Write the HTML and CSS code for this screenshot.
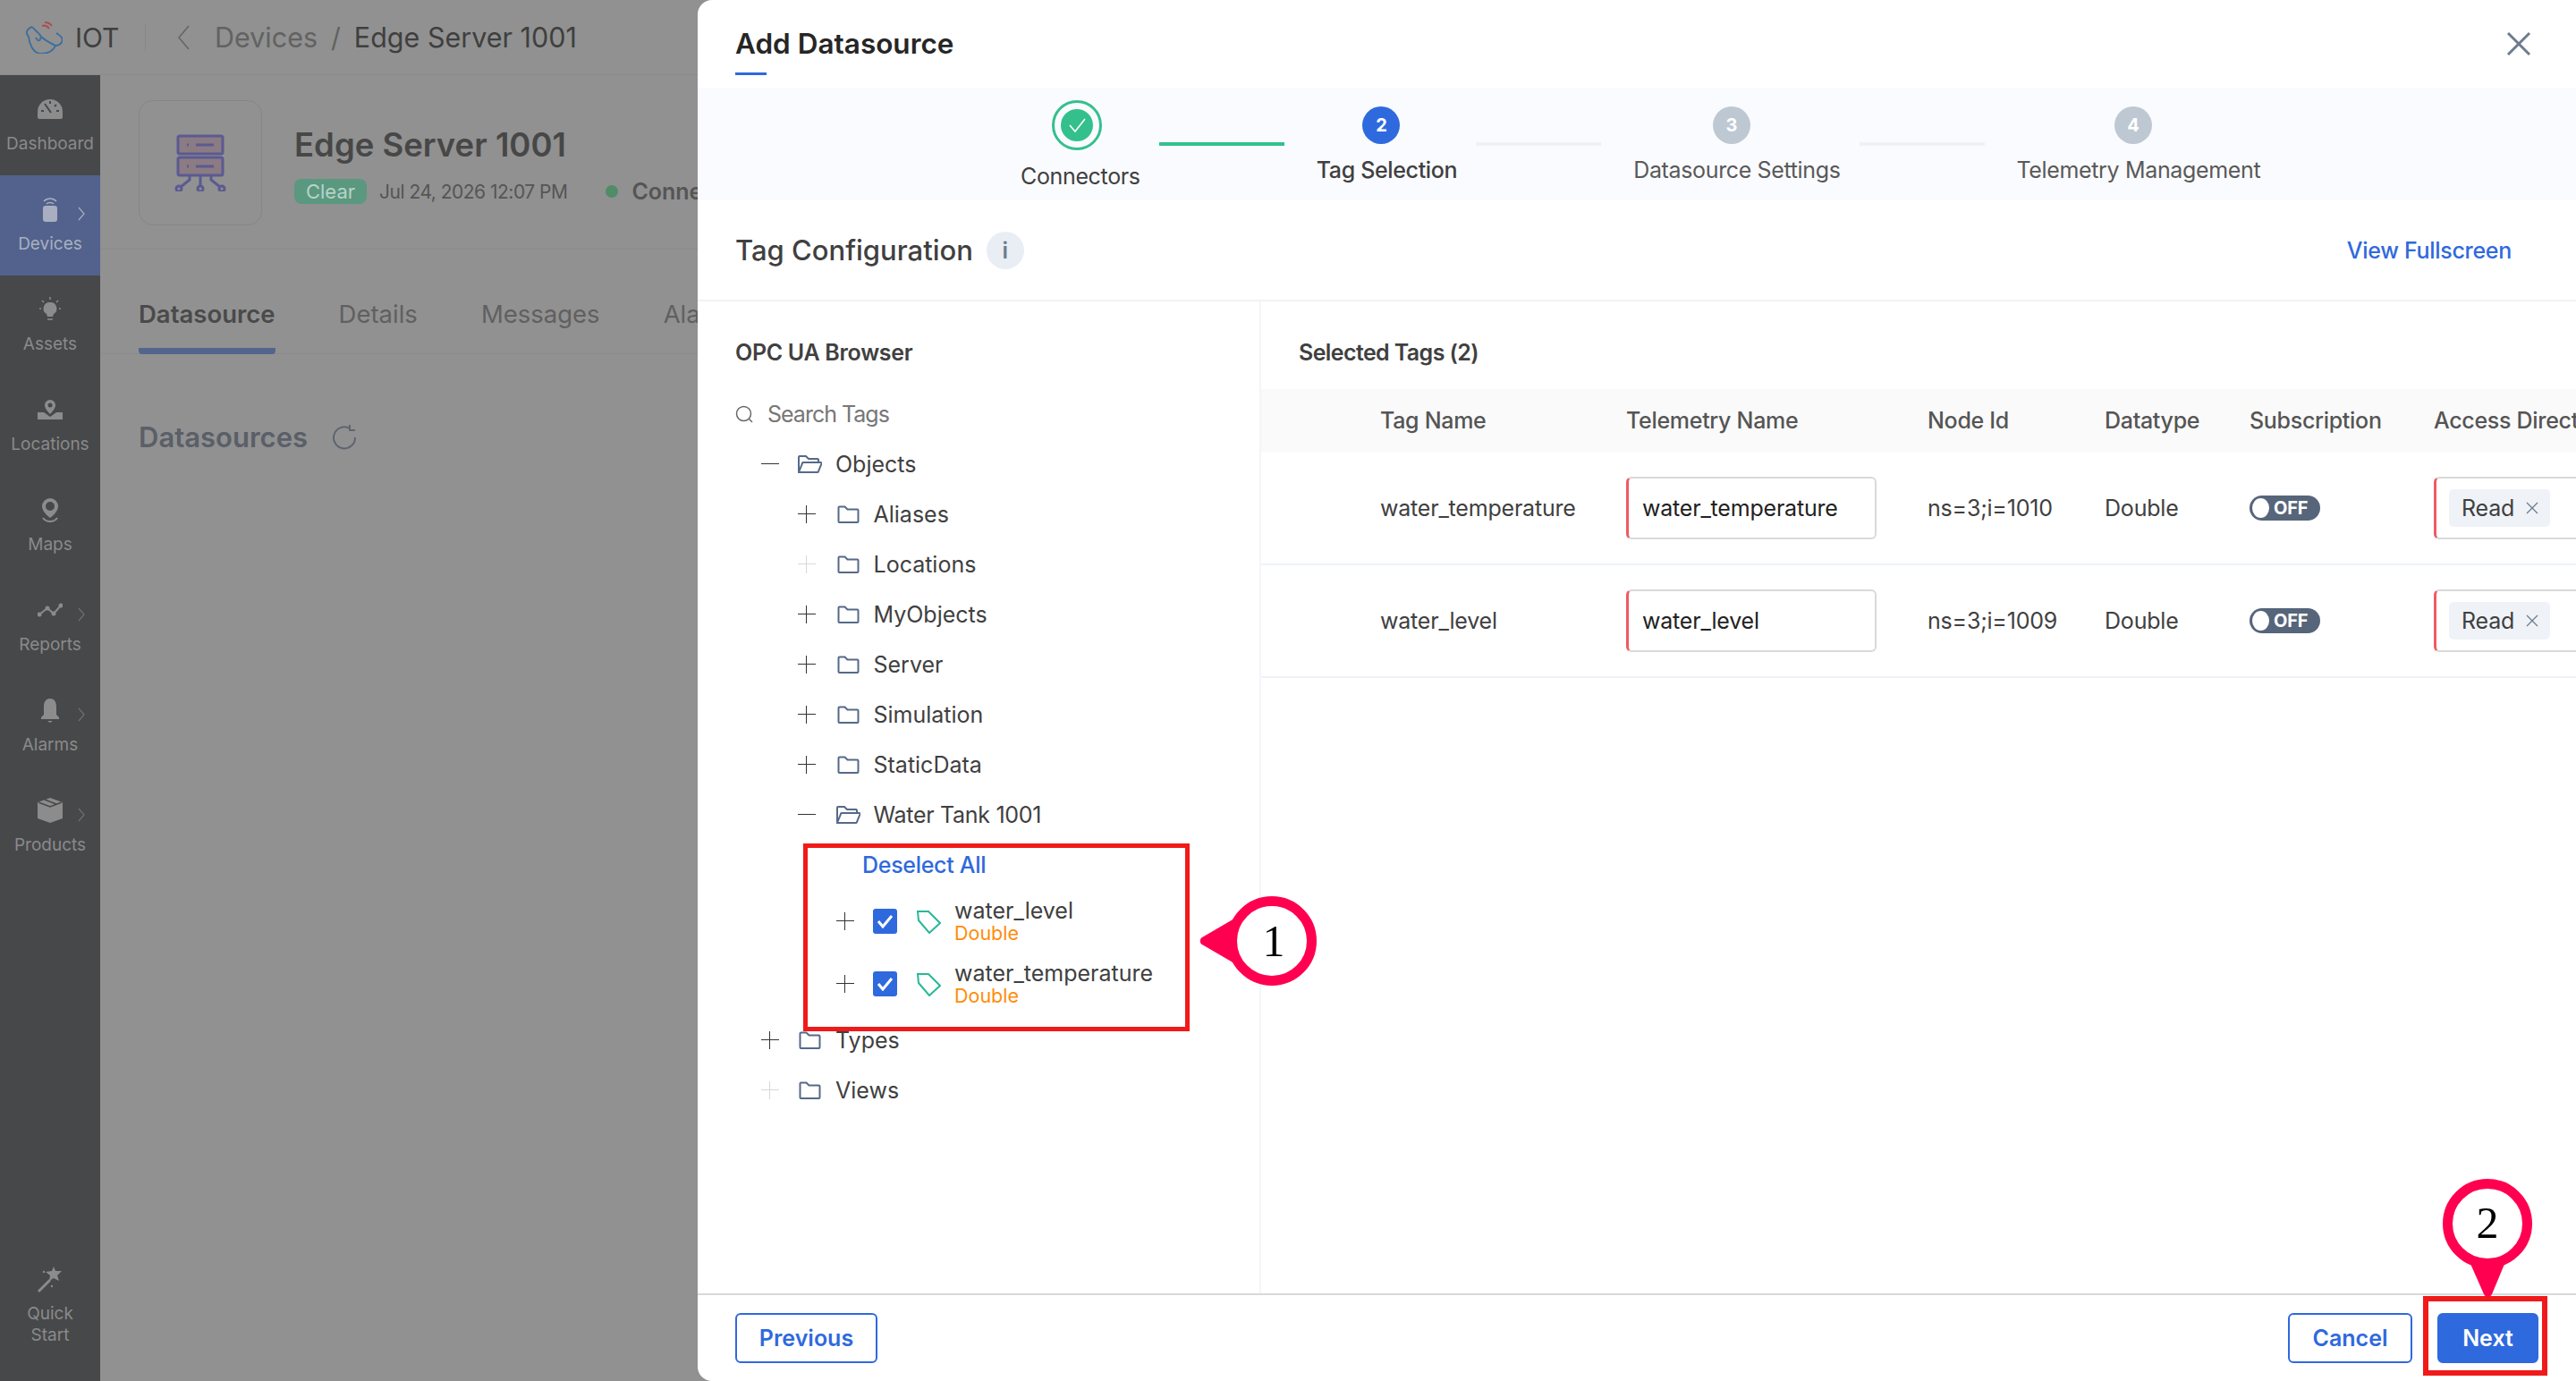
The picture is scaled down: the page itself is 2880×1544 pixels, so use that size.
FILE: index.html
```html
<!DOCTYPE html>
<html lang="en">
<head>
  <meta charset="UTF-8">
  <title>Add Datasource</title>
  <link rel="stylesheet" href="styles.css">
</head>
<body>

  <!-- Page behind the modal -->
  <div class="app">
    <header class="topbar">
      <svg class="logo" viewBox="0 0 42 36" fill="none" stroke="#3f6f9c" stroke-width="2">
        <path d="M8 6C2 8 0 13 4 17c1 9 5 18 13 19 10 0 15-4 17-9 6 0 9-5 7-9-2-3-5-4-6-5"/>
        <path d="M8 6c3 4 8 7 10 11 4 4 10 7 16 10"/>
        <path d="M12 18l3 4M18 17l-2 5"/>
        <path d="M19 5c3-1 6 0 8 3M22 1c3 0 6 1 8 4" stroke="#a8504f"/>
      </svg>
      <span class="app-name">IOT</span>
      <span class="top-sep"></span>
      <svg class="back" viewBox="0 0 14 28" fill="none" stroke="#666" stroke-width="1.6"><path d="M13 1L2 14l11 13"/></svg>
      <span class="crumb">Devices</span>
      <span class="crumb-slash">/</span>
      <span class="crumb-now">Edge Server 1001</span>
    </header>

    <div class="app-body">
      <nav class="sidebar">
        <a class="nav-item">
          <span class="nav-icon"><svg width="28" height="22" viewBox="0 0 28 22"><path fill="#8c8c8c" d="M14 0a14 14 0 0 1 14 14v6a2 2 0 0 1-2 2H2a2 2 0 0 1-2-2v-6A14 14 0 0 1 14 0z"/><path stroke="#47484a" stroke-width="2" d="M8 5l7 10M14 2v3M24 13h-3M4 13h3M21 6l-2 2"/></svg></span>
          <span class="nav-label">Dashboard</span>
        </a>
        <a class="nav-item active">
          <span class="nav-icon"><svg width="20" height="28" viewBox="0 0 20 28" fill="none"><path stroke="#a9afc0" stroke-width="1.5" d="M3 5c4-4 10-4 14 0M6 8c2-2 6-2 8 0"/><rect x="2" y="10" width="16" height="18" rx="3" fill="#a9afc0"/></svg></span>
          <svg class="nav-more" viewBox="0 0 8 16" fill="none" stroke="#a9afc0" stroke-width="1.2"><path d="M1 1l6 7-6 7"/></svg>
          <span class="nav-label">Devices</span>
        </a>
        <a class="nav-item">
          <span class="nav-icon"><svg width="24" height="28" viewBox="0 0 24 28" fill="none"><path fill="#8c8c8c" d="M12 6a7 7 0 0 1 4 13l-1 3H9l-1-3A7 7 0 0 1 12 6z"/><path stroke="#8c8c8c" stroke-width="1.5" d="M9 25h6M12 0v3M3 4l2 2M21 4l-2 2M0 13h2M22 13h2"/></svg></span>
          <span class="nav-label">Assets</span>
        </a>
        <a class="nav-item">
          <span class="nav-icon"><svg width="28" height="22" viewBox="0 0 28 22"><path fill="#8c8c8c" d="M14 0a6 6 0 0 1 6 6c0 3-3 7-6 10-3-3-6-7-6-10a6 6 0 0 1 6-6zM0 14h7l7 5 7-5h7v8H0z"/><circle cx="14" cy="6" r="2.5" fill="#47484a"/></svg></span>
          <span class="nav-label">Locations</span>
        </a>
        <a class="nav-item">
          <span class="nav-icon"><svg width="18" height="27" viewBox="0 0 18 27"><path fill="#8c8c8c" d="M9 0a9 9 0 0 1 9 9c0 5-5 10-9 13-4-3-9-8-9-13a9 9 0 0 1 9-9z"/><circle cx="9" cy="9" r="5" fill="#47484a"/><path stroke="#8c8c8c" stroke-width="2" fill="none" d="M1 22c2 3 5 4 8 4s6-1 8-4"/></svg></span>
          <span class="nav-label">Maps</span>
        </a>
        <a class="nav-item">
          <span class="nav-icon"><svg width="28" height="16" viewBox="0 0 28 16" fill="none" stroke="#8c8c8c" stroke-width="2"><path d="M2 13l9-7 7 6 8-9"/><circle cx="2" cy="13" r="1.5" fill="#8c8c8c"/><circle cx="11" cy="6" r="1.5" fill="#8c8c8c"/><circle cx="18" cy="12" r="1.5" fill="#8c8c8c"/><circle cx="26" cy="3" r="1.5" fill="#8c8c8c"/></svg></span>
          <svg class="nav-more" viewBox="0 0 8 16" fill="none" stroke="#6f6f6f" stroke-width="1.2"><path d="M1 1l6 7-6 7"/></svg>
          <span class="nav-label">Reports</span>
        </a>
        <a class="nav-item">
          <span class="nav-icon"><svg width="20" height="27" viewBox="0 0 20 27"><path fill="#8c8c8c" d="M10 0c5 0 7 4 7 9v9l3 3v2H0v-2l3-3V9c0-5 2-9 7-9zM7 25h6l-3 2z"/></svg></span>
          <svg class="nav-more" viewBox="0 0 8 16" fill="none" stroke="#6f6f6f" stroke-width="1.2"><path d="M1 1l6 7-6 7"/></svg>
          <span class="nav-label">Alarms</span>
        </a>
        <a class="nav-item">
          <span class="nav-icon"><svg width="28" height="28" viewBox="0 0 28 28"><path fill="#8c8c8c" d="M14 0l14 5v18l-14 5-14-5V5z"/><path fill="none" stroke="#47484a" stroke-width="1.5" d="M1 5l13 5 13-5M8 2l13 5"/></svg></span>
          <svg class="nav-more" viewBox="0 0 8 16" fill="none" stroke="#6f6f6f" stroke-width="1.2"><path d="M1 1l6 7-6 7"/></svg>
          <span class="nav-label">Products</span>
        </a>
        <a class="nav-item quick">
          <span class="nav-icon"><svg width="28" height="29" viewBox="0 0 28 29" fill="#8c8c8c"><path d="M18 0l2 5 7 0-5 5 2 6-6-3-5 3 1-6-5-4 7-1z"/><path d="M13 14l2 2L2 29l-2-2z"/><circle cx="7" cy="6" r="1.2"/><circle cx="16" cy="22" r="1.2"/></svg></span>
          <span class="nav-label">Quick<br>Start</span>
        </a>
      </nav>

      <main class="page">
        <section class="device-head">
          <div class="device-icon">
            <svg width="58" height="64" viewBox="0 0 58 64" fill="none" stroke="#5b5a92" stroke-width="3">
              <rect x="4" y="2" width="50" height="20" rx="2" fill="#8b7b83"/>
              <rect x="4" y="26" width="50" height="20" rx="2" fill="#8b7b83"/>
              <path d="M14 12h2M24 12h20M14 36h2M24 36h20M29 46v13M17 46v5l-10 8M41 46v5l10 8"/>
              <circle cx="5" cy="61" r="3"/><circle cx="29" cy="61" r="3"/><circle cx="53" cy="61" r="3"/>
            </svg>
          </div>
          <div class="device-info">
            <h1 class="device-title">Edge Server 1001</h1>
            <div class="device-meta">
              <span class="badge-clear">Clear</span>
              <span class="device-date">Jul 24, 2026 12:07 PM</span>
              <span class="dot"></span>
              <span class="device-state">Connected</span>
            </div>
          </div>
        </section>
        <div class="tabs">
          <span class="tab on">Datasource</span>
          <span class="tab">Details</span>
          <span class="tab">Messages</span>
          <span class="tab">Alarms</span>
        </div>
        <div class="ds-head">
          <h2>Datasources</h2>
          <svg width="28" height="28" viewBox="0 0 28 28" fill="none" stroke="#5e6570" stroke-width="2"><path d="M20 4a12 12 0 1 0 6 10M20 0v6h6"/></svg>
        </div>
      </main>
    </div>
  </div>

  <!-- Add Datasource modal -->
  <div class="modal">
    <div class="modal-head">
      <div class="modal-title">Add Datasource</div>
      <svg class="close" viewBox="0 0 28 28" fill="none" stroke="#6d7b8d" stroke-width="3"><path d="M2 2l24 24M26 2L2 26"/></svg>
    </div>

    <div class="stepper">
      <div class="step">
        <span class="step-done"><svg width="36" height="36" viewBox="0 0 36 36"><circle cx="18" cy="18" r="18" fill="#33c08d"/><path d="M10 18l6 7 11-14" fill="none" stroke="#fff" stroke-width="1.6"/></svg></span>
        <span class="step-label">Connectors</span>
      </div>
      <span class="step-line done"></span>
      <div class="step">
        <span class="step-num now">2</span>
        <span class="step-label now">Tag Selection</span>
      </div>
      <span class="step-line"></span>
      <div class="step">
        <span class="step-num">3</span>
        <span class="step-label later">Datasource Settings</span>
      </div>
      <span class="step-line"></span>
      <div class="step">
        <span class="step-num">4</span>
        <span class="step-label later">Telemetry Management</span>
      </div>
    </div>

    <div class="config-head">
      <span class="config-title">Tag Configuration</span>
      <span class="info">i</span>
      <a class="link fullscreen">View Fullscreen</a>
    </div>

    <div class="config-body">
      <aside class="browser">
        <div class="panel-title">OPC UA Browser</div>
        <div class="search">
          <svg width="20" height="20" viewBox="0 0 20 20" fill="none" stroke="#666" stroke-width="1.5"><circle cx="9.5" cy="9.5" r="8"/><path d="M15 15l4 4"/></svg>
          <span>Search Tags</span>
        </div>
        <div class="tree">
          <div class="row lvl1"><span class="exp minus"></span><svg class="fld"><use href="#folder-open"/></svg><span>Objects</span></div>
          <div class="row lvl2"><span class="exp plus"></span><svg class="fld"><use href="#folder"/></svg><span>Aliases</span></div>
          <div class="row lvl2"><span class="exp plus faint"></span><svg class="fld"><use href="#folder"/></svg><span>Locations</span></div>
          <div class="row lvl2"><span class="exp plus"></span><svg class="fld"><use href="#folder"/></svg><span>MyObjects</span></div>
          <div class="row lvl2"><span class="exp plus"></span><svg class="fld"><use href="#folder"/></svg><span>Server</span></div>
          <div class="row lvl2"><span class="exp plus"></span><svg class="fld"><use href="#folder"/></svg><span>Simulation</span></div>
          <div class="row lvl2"><span class="exp plus"></span><svg class="fld"><use href="#folder"/></svg><span>StaticData</span></div>
          <div class="row lvl2"><span class="exp minus"></span><svg class="fld"><use href="#folder-open"/></svg><span class="tank">Water Tank 1001</span></div>
          <div class="row deselect"><a class="link">Deselect All</a></div>
          <div class="tag-row">
            <span class="exp plus"></span>
            <span class="check"><svg width="19" height="16" viewBox="0 0 19 16" fill="none" stroke="#fff" stroke-width="3"><path d="M2 8l5 6L17 2"/></svg></span>
            <svg class="tag"><use href="#tag"/></svg>
            <div class="tag-text"><div>water_level</div><div class="tag-type">Double</div></div>
          </div>
          <div class="tag-row">
            <span class="exp plus"></span>
            <span class="check"><svg width="19" height="16" viewBox="0 0 19 16" fill="none" stroke="#fff" stroke-width="3"><path d="M2 8l5 6L17 2"/></svg></span>
            <svg class="tag"><use href="#tag"/></svg>
            <div class="tag-text"><div>water_temperature</div><div class="tag-type">Double</div></div>
          </div>
          <div class="row lvl1"><span class="exp plus"></span><svg class="fld"><use href="#folder"/></svg><span>Types</span></div>
          <div class="row lvl1"><span class="exp plus faint"></span><svg class="fld"><use href="#folder"/></svg><span>Views</span></div>
        </div>
      </aside>

      <section class="selected">
        <div class="panel-title">Selected Tags (2)</div>
        <table class="tags-table">
          <thead>
            <tr>
              <th class="c-blank"></th>
              <th class="c-tag">Tag Name</th>
              <th class="c-tele">Telemetry Name</th>
              <th class="c-node">Node Id</th>
              <th class="c-type">Datatype</th>
              <th class="c-sub">Subscription</th>
              <th class="c-acc">Access Direction</th>
            </tr>
          </thead>
          <tbody>
            <tr>
              <td></td>
              <td>water_temperature</td>
              <td><div class="field">water_temperature</div></td>
              <td>ns=3;i=1010</td>
              <td>Double</td>
              <td><span class="toggle"><i></i>OFF</span></td>
              <td><div class="field access"><span class="chip">Read<svg width="14" height="14" viewBox="0 0 14 14" stroke="#6d7b8d" stroke-width="1.3"><path d="M1 1l12 12M13 1L1 13"/></svg></span></div></td>
            </tr>
            <tr>
              <td></td>
              <td>water_level</td>
              <td><div class="field">water_level</div></td>
              <td>ns=3;i=1009</td>
              <td>Double</td>
              <td><span class="toggle"><i></i>OFF</span></td>
              <td><div class="field access"><span class="chip">Read<svg width="14" height="14" viewBox="0 0 14 14" stroke="#6d7b8d" stroke-width="1.3"><path d="M1 1l12 12M13 1L1 13"/></svg></span></div></td>
            </tr>
          </tbody>
        </table>
      </section>
    </div>

    <div class="modal-foot">
      <button class="btn">Previous</button>
      <span class="foot-gap"></span>
      <button class="btn">Cancel</button>
      <button class="btn primary">Next</button>
    </div>
  </div>

  <!-- Tutorial annotations over the screenshot -->
  <div class="mark mark-tree"></div>
  <div class="mark mark-next"></div>
  <svg class="callout callout-1" width="136" height="104" viewBox="0 0 136 104">
    <path d="M4 48l36-21v50L4 56c-3-2-3-6 0-8z" fill="#ff0050"/>
    <circle cx="82" cy="52" r="44.500" fill="#fff" stroke="#ff0050" stroke-width="11"/>
    <text x="84" y="69" text-anchor="middle" class="callout-num">1</text>
  </svg>
  <svg class="callout callout-2" width="104" height="136" viewBox="0 0 104 136">
    <path d="M30 90h44l-17 41c-2 4-7 4-9 0z" fill="#ff0050"/>
    <circle cx="52" cy="52" r="44.500" fill="#fff" stroke="#ff0050" stroke-width="11"/>
    <text x="52" y="68" text-anchor="middle" class="callout-num">2</text>
  </svg>

  <!-- Shared icons -->
  <svg class="defs">
    <symbol id="folder" viewBox="0 0 27 22"><path d="M2.500 19V3.500a1 1 0 0 1 1-1h6l3 3h11a1 1 0 0 1 1 1V19a1 1 0 0 1-1 1h-20a1 1 0 0 1-1-1z" fill="none" stroke="#56698a" stroke-width="2"/></symbol>
    <symbol id="folder-open" viewBox="0 0 27 22"><path d="M1 19V3a1 1 0 0 1 1-1h7l3 3h10a1 1 0 0 1 1 1v3M1 20l4-10a1 1 0 0 1 1-1h19.500a1 1 0 0 1 1 1.300L23 19a1 1 0 0 1-1 1H1z" fill="none" stroke="#56698a" stroke-width="2"/></symbol>
    <symbol id="tag" viewBox="0 0 27 27"><path d="M1 2h12l13 13-12 11L2 12z" fill="none" stroke="#27b898" stroke-width="2"/></symbol>
  </svg>

</body>
</html>
```

FILE: styles.css
```css
* {
  box-sizing: border-box;
}

body {
  margin: 0;
  height: 1544px;
  overflow: hidden;
  position: relative;
  font-family: Inter, "Noto Sans", sans-serif;
  font-size: 25px;
  color: #404040;
  background-color: #919191;
}

.defs {
  display: none;
}

/* Page behind the modal, already dimmed */
.app {
  height: 100%;
  display: flex;
  flex-direction: column;
}

.topbar {
  height: 84px;
  padding-left: 28px;
  display: flex;
  align-items: center;
  flex-shrink: 0;
  border-bottom: 1px solid #8a8a8a;
}

.logo {
  width: 42px;
  height: 36px;
  margin-right: 14px;
}

.app-name {
  font-size: 30px;
  color: #3f3f3f;
  width: 50px;
}

.top-sep {
  width: 1px;
  height: 31px;
  background-color: #868686;
  margin: 0 35px 0 28px;
}

.back {
  width: 14px;
  height: 28px;
  margin-right: 28px;
}

.crumb {
  font-size: 30.500px;
  color: #626262;
}

.crumb-slash {
  font-size: 30px;
  color: #626262;
  margin: 0 15px;
}

.crumb-now {
  font-size: 30.500px;
  color: #3f3f3f;
}

.app-body {
  flex: 1;
  display: flex;
}

.sidebar {
  width: 112px;
  background-color: #47484a;
  display: flex;
  flex-direction: column;
  flex-shrink: 0;
}

.nav-item {
  position: relative;
  height: 112px;
  padding-top: 20px;
  display: flex;
  flex-direction: column;
  align-items: center;
}

.nav-item.active {
  background-color: #52628c;
}

.nav-item.quick {
  margin-top: auto;
  height: 152px;
}

.nav-icon {
  height: 36px;
  display: flex;
  align-items: center;
  justify-content: center;
}

.nav-more {
  position: absolute;
  left: 87px;
  top: 35px;
  width: 8px;
  height: 16px;
}

.nav-label {
  margin-top: 9px;
  font-size: 19px;
  line-height: 24px;
  text-align: center;
  color: #8a8a8a;
}

.active .nav-label {
  color: #a9afc0;
}

.page {
  flex: 1;
}

.device-head {
  height: 195px;
  padding: 28px 0 0 43px;
  display: flex;
  gap: 36px;
  border-bottom: 1px solid #8a8a8a;
}

.device-icon {
  width: 138px;
  height: 140px;
  border: 1px solid #868686;
  border-radius: 16px;
  display: flex;
  align-items: center;
  justify-content: center;
}

.device-title {
  margin: 26px 0 0;
  font-size: 36.500px;
  line-height: 48px;
  font-weight: 600;
  color: #474747;
}

.device-meta {
  margin-top: 13px;
  display: flex;
  align-items: center;
  white-space: nowrap;
}

.badge-clear {
  width: 81px;
  height: 28px;
  border-radius: 8px;
  background-color: #5b9880;
  color: #b7d3c7;
  font-size: 22px;
  line-height: 28px;
  text-align: center;
}

.device-date {
  margin-left: 14px;
  font-size: 21px;
  letter-spacing: -0.500px;
  color: #555;
}

.dot {
  width: 14px;
  height: 14px;
  margin-left: 43px;
  border-radius: 50%;
  background-color: #4f8c68;
}

.device-state {
  margin-left: 15px;
  font-weight: 600;
  color: #555;
}

.tabs {
  height: 117px;
  padding-left: 43px;
  display: flex;
  gap: 71px;
  border-bottom: 1px solid #8a8a8a;
  font-size: 27.500px;
  color: #606060;
  white-space: nowrap;
}

.tab {
  height: 117px;
  line-height: 144px;
}

.tab.on {
  font-weight: 600;
  color: #4a4a4a;
  border-bottom: 7px solid #54648c;
  border-radius: 0 0 4px 4px;
}

.ds-head {
  margin: 73px 0 0 43px;
  display: flex;
  align-items: center;
  gap: 27px;
}

.ds-head h2 {
  margin: 0;
  font-size: 31px;
  line-height: 40px;
  font-weight: 600;
  color: #5a5f68;
}

/* Modal */
.modal {
  position: absolute;
  top: 0;
  left: 780px;
  right: 0;
  bottom: 0;
  background-color: #fff;
  border-radius: 16px 0 0 16px;
  display: flex;
  flex-direction: column;
  overflow: hidden;
}

.modal-head {
  height: 98px;
  flex-shrink: 0;
  padding: 30px 50px 0 42px;
  display: flex;
  justify-content: space-between;
}

.modal-title {
  height: 54px;
  font-size: 31.500px;
  line-height: 38px;
  font-weight: 600;
  color: #262626;
  position: relative;
}

.modal-title::after {
  content: "";
  position: absolute;
  left: 0;
  top: 51px;
  width: 35px;
  height: 3px;
  background-color: #2f69de;
}

.close {
  width: 28px;
  height: 28px;
  margin-top: 5px;
}

.stepper {
  height: 126px;
  flex-shrink: 0;
  padding: 14px 0 0 361px;
  background-color: #fafbfe;
  display: flex;
  align-items: flex-start;
}

.step {
  display: flex;
  flex-direction: column;
  align-items: center;
  letter-spacing: -0.350px;
}

.step-done {
  width: 56px;
  height: 56px;
  margin-right: 8px;
  border: 3px solid #33c08d;
  border-radius: 50%;
  display: flex;
  align-items: center;
  justify-content: center;
}

.step-num {
  width: 42px;
  height: 42px;
  margin: 7px 12px 0 0;
  border-radius: 50%;
  background-color: #bec8d2;
  color: #fff;
  font-size: 20px;
  font-weight: 700;
  line-height: 42px;
  text-align: center;
}

.step-num.now {
  background-color: #2f69de;
}

.step-label {
  margin-top: 14px;
  line-height: 30px;
  white-space: nowrap;
}

.step-label.now {
  font-weight: 500;
}

.step-label.later {
  color: #595959;
}

.step-line {
  width: 140px;
  height: 4px;
  margin: 47px 36px 0 21px;
  background-color: #f1f1f1;
}

.step-line.done {
  background-color: #33c08d;
}

.config-head {
  height: 113px;
  flex-shrink: 0;
  padding: 0 72px 0 42px;
  display: flex;
  align-items: center;
  border-bottom: 2px solid #f3f3f3;
}

.config-title {
  font-size: 31px;
  font-weight: 500;
}

.info {
  width: 42px;
  height: 42px;
  margin-left: 15px;
  border-radius: 50%;
  background-color: #e9edf4;
  color: #6d7b8d;
  font-weight: 600;
  line-height: 42px;
  text-align: center;
}

.link {
  color: #2f69de;
  font-weight: 500;
  letter-spacing: -0.300px;
}

.fullscreen {
  margin-left: auto;
}

.config-body {
  flex: 1;
  display: flex;
  min-height: 0;
}

.browser {
  width: 630px;
  flex-shrink: 0;
  padding: 37px 0 0 42px;
  border-right: 2px solid #f3f5f8;
}

.panel-title {
  height: 40px;
  font-weight: 600;
  line-height: 40px;
  letter-spacing: -0.300px;
}

.search {
  height: 56px;
  margin-top: 21px;
  display: flex;
  align-items: center;
  gap: 16px;
  color: #777;
  letter-spacing: -1px;
}

.row {
  height: 56px;
  display: flex;
  align-items: center;
  white-space: nowrap;
}

.lvl1 {
  padding-left: 29px;
}

.lvl2 {
  padding-left: 70px;
}

.lvl2 .exp {
  margin-right: 22.500px;
}

.tank {
  letter-spacing: -0.300px;
}

.deselect {
  padding-left: 142px;
}

.exp {
  width: 20px;
  height: 20px;
  margin-right: 21px;
  flex-shrink: 0;
  position: relative;
  color: #333;
}

.minus::before,
.plus::before {
  content: "";
  position: absolute;
  left: 0;
  right: 0;
  top: 9px;
  height: 1px;
  background-color: currentColor;
}

.plus::after {
  content: "";
  position: absolute;
  top: 0;
  bottom: 0;
  left: 9px;
  width: 1px;
  background-color: currentColor;
}

.exp.faint {
  color: #d8d8d8;
}

.fld {
  width: 27px;
  height: 22px;
  margin-right: 15px;
  flex-shrink: 0;
}

.tag-row {
  height: 70px;
  padding-left: 113px;
  display: flex;
  align-items: center;
}

.check {
  width: 27px;
  height: 28px;
  margin-right: 22px;
  border-radius: 3px;
  background-color: #2f69de;
  display: flex;
  align-items: center;
  justify-content: center;
}

.tag {
  width: 27px;
  height: 27px;
  margin-right: 15px;
}

.tag-text {
  line-height: 24px;
}

.tag-type {
  margin-top: 1px;
  font-size: 21.500px;
  color: #ff8c0a;
}

.selected {
  flex: 1;
  min-width: 0;
  padding-top: 37px;
  overflow: hidden;
}

.selected .panel-title {
  padding-left: 42px;
  margin-bottom: 21px;
  letter-spacing: -0.600px;
}

.tags-table {
  width: 1611px;
  table-layout: fixed;
  border-collapse: collapse;
}

.c-blank { width: 133px; }
.c-tag { width: 275px; }
.c-tele { width: 337px; }
.c-node { width: 198px; }
.c-type { width: 162px; }
.c-sub { width: 206px; }
.c-acc { width: 300px; }

.tags-table th {
  height: 70px;
  padding: 0;
  background-color: #fafafa;
  font-weight: 500;
  color: #555;
  text-align: left;
  white-space: nowrap;
  letter-spacing: -0.300px;
}

.tags-table td {
  height: 126px;
  padding: 0;
  border-bottom: 2px solid #eef2f8;
  letter-spacing: -0.200px;
}

.field {
  width: 280px;
  height: 70px;
  padding-left: 15px;
  display: flex;
  align-items: center;
  border: 2px solid #d9d9d9;
  border-left: 3px solid #ef5a63;
  border-radius: 6px;
  color: #222;
}

.field.access {
  padding-left: 14px;
}

.chip {
  width: 113px;
  height: 42px;
  padding: 0 13px 0 14px;
  border-radius: 5px;
  background-color: #eff3f8;
  color: #404040;
  display: flex;
  align-items: center;
  justify-content: space-between;
}

.toggle {
  width: 79px;
  height: 28px;
  padding: 0 0 0 3px;
  border-radius: 14px;
  background-color: #56657a;
  color: #fff;
  font-size: 20px;
  font-weight: 700;
  line-height: 28px;
  display: flex;
  align-items: center;
  gap: 5px;
}

.toggle i {
  width: 19px;
  height: 22px;
  border-radius: 50%;
  background-color: #fff;
}

.modal-foot {
  height: 98px;
  flex-shrink: 0;
  padding: 20px 42px 0;
  border-top: 2px solid #d9d9d9;
  display: flex;
  align-items: flex-start;
}

.foot-gap {
  flex: 1;
}

.btn {
  width: 159px;
  height: 56px;
  border: 2px solid #2f69de;
  border-radius: 6px;
  background-color: #fff;
  color: #2f69de;
  font-family: inherit;
  font-size: 25px;
  font-weight: 600;
}

.btn:nth-of-type(2) {
  width: 139px;
  margin-right: 28px;
}

.btn.primary {
  width: 113px;
  background-color: #2f69de;
  color: #fff;
}

/* Red highlight boxes and numbered pins */
.mark {
  position: absolute;
  border: 5px solid #f01a1a;
}

.mark-tree {
  left: 898px;
  top: 943px;
  width: 432px;
  height: 210px;
}

.mark-next {
  left: 2709px;
  top: 1449px;
  width: 139px;
  height: 89px;
  border-width: 6px;
}

.callout {
  position: absolute;
}

.callout-1 {
  left: 1340px;
  top: 1000px;
}

.callout-2 {
  left: 2729px;
  top: 1316px;
}

.callout-num {
  font-family: "Liberation Serif", serif;
  font-size: 50px;
  fill: #000;
}
```
